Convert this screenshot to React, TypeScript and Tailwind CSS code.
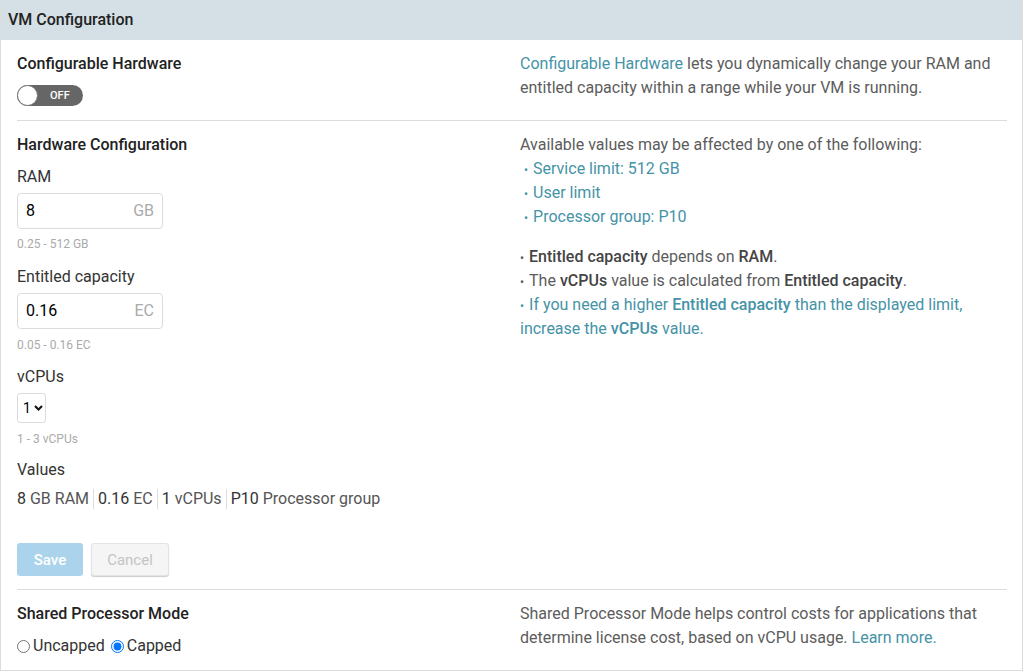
import React from "react";

const Bullet = () => <span className="text-[12px] leading-none mr-[5px]">•</span>;

export default function App() {
  return (
    <div className="w-[1024px] h-[671px] bg-white text-[16px] leading-[24px] text-[#333]" style={{ fontFamily: "Roboto, 'Liberation Sans', sans-serif" }}>
      <div className="w-[1023px] border-r border-b border-l border-[#dcdcdc] h-[671px]">
        <div className="h-[40px] bg-[#d4e0e6] flex items-center pl-[7px] font-medium text-[#222]">VM Configuration</div>
        <div className="pl-[16px] pr-[15px]">
          {/* Section 1 */}
          <div className="grid grid-cols-2 gap-x-[16px] pt-[12px] pb-[14px] border-b border-[#dcdcdc]">
            <div>
              <div className="font-medium text-[#222]">Configurable Hardware</div>
              <div className="mt-[9px] w-[66px] h-[21px] rounded-full bg-[#666] relative flex items-center">
                <div className="absolute left-0 top-0 w-[21px] h-[21px] rounded-full bg-white border border-[#777]"></div>
                <span className="ml-[33px] text-[11px] leading-none text-white font-medium">OFF</span>
              </div>
            </div>
            <div className="text-[#5c5c5c]">
              <span className="text-[#4593a7]">Configurable Hardware</span> lets you dynamically change your RAM and entitled capacity within a range while your VM is running.
            </div>
          </div>
          {/* Section 2 */}
          <div className="grid grid-cols-2 gap-x-[16px] pt-[12px] pb-[13px] border-b border-[#dcdcdc]">
            <div>
              <div className="font-medium text-[#222]">Hardware Configuration</div>
              <div className="mt-[8px]">RAM</div>
              <div className="mt-[4px] w-[146px] h-[36px] border border-[#dcdcdc] rounded-[4px] flex items-center justify-between px-[8px]">
                <span className="text-black">8</span>
                <span className="text-[#aaa]">GB</span>
              </div>
              <div className="mt-[7px] text-[12px] leading-[16px] text-[#aaa]">0.25 - 512 GB</div>
              <div className="mt-[13px]">Entitled capacity</div>
              <div className="mt-[4px] w-[146px] h-[36px] border border-[#dcdcdc] rounded-[4px] flex items-center justify-between px-[8px]">
                <span className="text-black">0.16</span>
                <span className="text-[#aaa]">EC</span>
              </div>
              <div className="mt-[8px] text-[12px] leading-[16px] text-[#aaa]">0.05 - 0.16 EC</div>
              <div className="mt-[12px]">vCPUs</div>
              <div className="mt-[4px] w-[29px] h-[30px] border border-[#dcdcdc] rounded-[3px] flex items-center pl-[5px] gap-[3px]">
                <span className="text-[14px] text-black">1</span>
                <svg width="9" height="6" viewBox="0 0 9 6"><path d="M1 1l3.5 3.5L8 1" stroke="#111" strokeWidth="2" fill="none" /></svg>
              </div>
              <div className="mt-[8px] text-[12px] leading-[16px] text-[#aaa]">1 - 3 vCPUs</div>
              <div className="mt-[11px]">Values</div>
              <div className="mt-[5px] flex items-center text-[#555]">
                <span><span className="text-[#333]">8</span> GB RAM</span>
                <span className="mx-[4px] w-px h-[20px] bg-[#ddd]"></span>
                <span><span className="text-[#333]">0.16</span> EC</span>
                <span className="mx-[4px] w-px h-[20px] bg-[#ddd]"></span>
                <span><span className="text-[#333]">1</span> vCPUs</span>
                <span className="mx-[4px] w-px h-[20px] bg-[#ddd]"></span>
                <span><span className="text-[#333]">P10</span> Processor group</span>
              </div>
              <div className="mt-[32px] flex gap-[8px]">
                <div className="w-[66px] h-[33px] rounded-[3px] bg-[#acd3ec] text-white flex items-center justify-center font-medium text-[15px]">Save</div>
                <div className="w-[78px] h-[33px] rounded-[3px] bg-[#f5f5f5] border border-[#e4e4e4] shadow-[0_1px_1px_rgba(0,0,0,0.2)] text-[#c4c4c4] flex items-center justify-center text-[15px]">Cancel</div>
              </div>
            </div>
            <div className="text-[#5c5c5c]">
              <div>Available values may be affected by one of the following:</div>
              <div className="pl-[4px] text-[#4593a7]"><Bullet />Service limit: 512 GB</div>
              <div className="pl-[4px] text-[#4593a7]"><Bullet />User limit</div>
              <div className="pl-[4px] text-[#4593a7]"><Bullet />Processor group: P10</div>
              <div className="mt-[16px]"><Bullet /><span className="font-medium text-[#444]">Entitled capacity</span> depends on <span className="font-medium text-[#444]">RAM</span>.</div>
              <div><Bullet />The <span className="font-medium text-[#444]">vCPUs</span> value is calculated from <span className="font-medium text-[#444]">Entitled capacity</span>.</div>
              <div className="text-[#4593a7]"><Bullet />If you need a higher <span className="font-medium">Entitled capacity</span> than the displayed limit, increase the <span className="font-medium">vCPUs</span> value.</div>
            </div>
          </div>
          {/* Section 3 */}
          <div className="grid grid-cols-2 gap-x-[16px] pt-[12px]">
            <div>
              <div className="font-medium text-[#222]">Shared Processor Mode</div>
              <div className="mt-[8px] flex items-center">
                <label className="flex items-center"><input type="radio" name="spm" className="m-0 mr-[3px] w-[13px] h-[13px]" />Uncapped</label>
                <label className="flex items-center ml-[6px]"><input type="radio" name="spm" defaultChecked className="m-0 mr-[3px] w-[13px] h-[13px]" />Capped</label>
              </div>
            </div>
            <div className="text-[#5c5c5c]">
              Shared Processor Mode helps control costs for applications that determine license cost, based on vCPU usage. <span className="text-[#4593a7]">Learn more.</span>
            </div>
          </div>
        </div>
      </div>
    </div>
  );
}
